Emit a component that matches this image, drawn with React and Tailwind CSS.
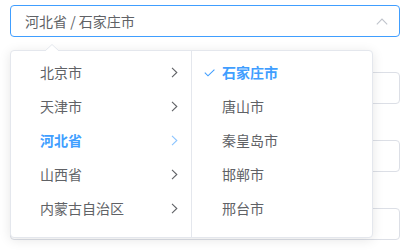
import React from 'react'

const provinces = [
  { label: '北京市' },
  { label: '天津市' },
  { label: '河北省', active: true },
  { label: '山西省' },
  { label: '内蒙古自治区' },
]

const cities = [
  { label: '石家庄市', active: true },
  { label: '唐山市' },
  { label: '秦皇岛市' },
  { label: '邯郸市' },
  { label: '邢台市' },
]

function Chevron({ color }) {
  return (
    <svg width="7" height="11" viewBox="0 0 7 11" className="absolute right-[13px] top-[12px]">
      <polyline points="1,0.8 5.8,5.5 1,10.2" fill="none" stroke={color} strokeWidth="1.1" />
    </svg>
  )
}

function Check() {
  return (
    <svg width="11" height="8" viewBox="0 0 11 8" className="absolute left-[12px] top-[14px]">
      <polyline points="0.8,3.6 4,6.8 10.4,0.6" fill="none" stroke="#409eff" strokeWidth="1.1" />
    </svg>
  )
}

export default function App() {
  return (
    <div className="relative w-[412px] h-[250px] bg-white font-['Noto_Sans_CJK_SC',sans-serif] text-[14px] text-[#606266]">
      <div className="pt-[5px] pl-[10px]">
        {/* Cascader input */}
        <div className="w-[390px] h-[32px] rounded-[4px] border border-[#409eff] flex items-center justify-between pl-[14px] pr-[11px]">
          <span className="leading-none">河北省 / 石家庄市</span>
          <svg width="12" height="7" viewBox="0 0 12 7">
            <polyline points="0.8,6.3 6,1 11.2,6.3" fill="none" stroke="#c0c4cc" strokeWidth="1.1" />
          </svg>
        </div>

        {/* Form inputs behind the dropdown */}
        <div className="mt-[35px] flex flex-col gap-[36px]">
          <div className="w-[390px] h-[32px] rounded-[4px] border border-[#dcdfe6]" />
          <div className="w-[390px] h-[32px] rounded-[4px] border border-[#dcdfe6]" />
          <div className="w-[390px] h-[32px] rounded-[4px] border border-[#dcdfe6]" />
        </div>
      </div>

      {/* Dropdown panel */}
      <div className="absolute left-[10px] top-[50px] w-[363px] h-[188px] bg-white border border-[#e4e7ed] rounded-[4px] shadow-[0_2px_12px_rgba(0,0,0,0.1)] flex">
        <svg width="14" height="7" viewBox="0 0 14 7" className="absolute left-[34px] top-[-7px]">
          <polygon points="0,7 7,0.5 14,7" fill="white" />
          <polyline points="0,7 7,0.5 14,7" fill="none" stroke="#e4e7ed" strokeWidth="1" />
        </svg>

        <ul className="w-[181px] border-r border-[#e4e7ed] pt-[4px]">
          {provinces.map(p => (
            <li
              key={p.label}
              className={`relative h-[34px] flex items-center pl-[29px] ${p.active ? 'text-[#409eff] font-bold' : ''}`}
            >
              {p.label}
              <Chevron color={p.active ? '#8cc5ff' : '#606266'} />
            </li>
          ))}
        </ul>

        <ul className="w-[180px] pt-[4px]">
          {cities.map(c => (
            <li
              key={c.label}
              className={`relative h-[34px] flex items-center pl-[30px] ${c.active ? 'text-[#409eff] font-bold' : ''}`}
            >
              {c.active && <Check />}
              {c.label}
            </li>
          ))}
        </ul>
      </div>
    </div>
  )
}
